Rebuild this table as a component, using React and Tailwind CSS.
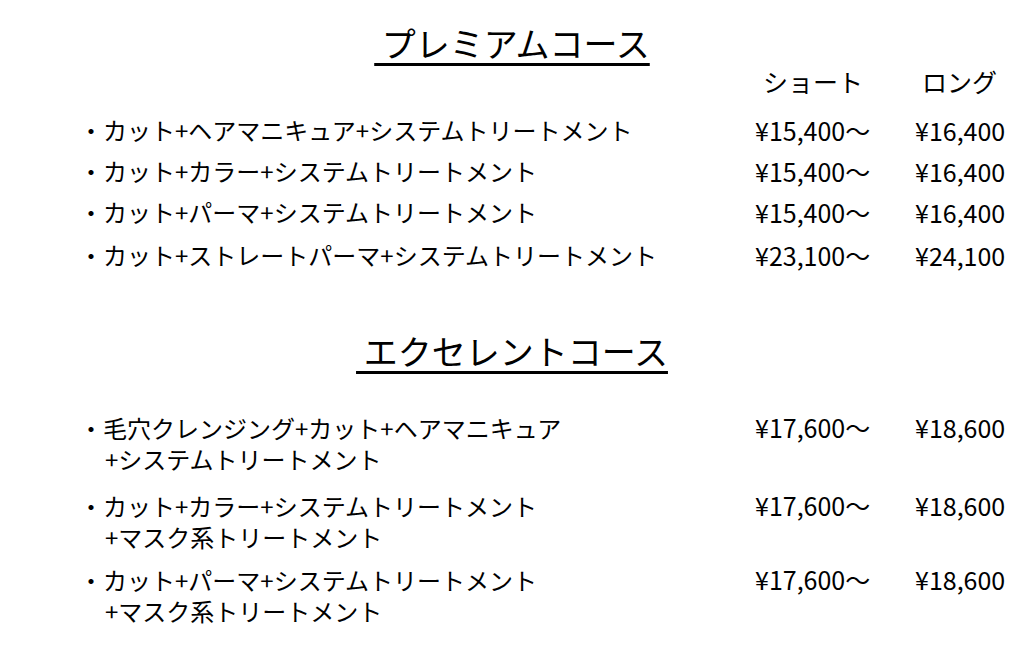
import React from "react";

const premium = [
  ["・カット+ヘアマニキュア+システムトリートメント", "¥15,400〜", "¥16,400"],
  ["・カット+カラー+システムトリートメント", "¥15,400〜", "¥16,400"],
  ["・カット+パーマ+システムトリートメント", "¥15,400〜", "¥16,400"],
  ["・カット+ストレートパーマ+システムトリートメント", "¥23,100〜", "¥24,100"],
];

const excellent = [
  ["・毛穴クレンジング+カット+ヘアマニキュア", "+システムトリートメント", "¥17,600〜", "¥18,600", "mt-[39px]"],
  ["・カット+カラー+システムトリートメント", "+マスク系トリートメント", "¥17,600〜", "¥18,600", "mt-[16px]"],
  ["・カット+パーマ+システムトリートメント", "+マスク系トリートメント", "¥17,600〜", "¥18,600", "mt-[12px]"],
];

export default function App() {
  return (
    <div
      className="w-[1024px] h-[647px] bg-white text-black overflow-hidden"
      style={{ fontFamily: '"Noto Sans CJK JP", "Noto Sans", sans-serif' }}
    >
      <div className="flex justify-center pt-[21px]">
        <h1 className="text-[34px] leading-[44px] font-normal underline underline-offset-[6px] decoration-[3px] whitespace-pre">
          {" プレミアムコース"}
        </h1>
      </div>
      <div className="grid grid-cols-[676px_159px_1fr] pl-[79px] text-[25px] leading-[30px]">
        <div />
        <div className="pl-[8px] mt-[1px]">ショート</div>
        <div className="pl-[8px] mt-[1px]">ロング</div>
      </div>
      <div className="flex flex-col mt-[19px]">
        {premium.map((r, i) => (
          <div
            key={i}
            className={`grid grid-cols-[676px_159px_1fr] pl-[79px] leading-[30px] ${i === 3 ? "mt-[13px]" : i === 0 ? "" : "mt-[11px]"}`}
          >
            <div className="text-[24px]">{r[0]}</div>
            <div className="text-[25px]">{r[1]}</div>
            <div className="text-[25px] pl-[1px]">{r[2]}</div>
          </div>
        ))}
      </div>
      <div className="flex justify-center mt-[59px]">
        <h1 className="text-[34px] leading-[44px] font-normal underline underline-offset-[6px] decoration-[3px] whitespace-pre">
          {" エクセレントコース"}
        </h1>
      </div>
      <div className="flex flex-col">
        {excellent.map((r, i) => (
          <div key={i} className={`grid grid-cols-[676px_159px_1fr] pl-[79px] ${r[4]}`}>
            <div className="text-[24px] leading-[31px]">
              <div>{r[0]}</div>
              <div className="pl-[26px]">{r[1]}</div>
            </div>
            <div className="text-[25px] leading-[31px]">{r[2]}</div>
            <div className="text-[25px] leading-[31px] pl-[1px]">{r[3]}</div>
          </div>
        ))}
      </div>
    </div>
  );
}
